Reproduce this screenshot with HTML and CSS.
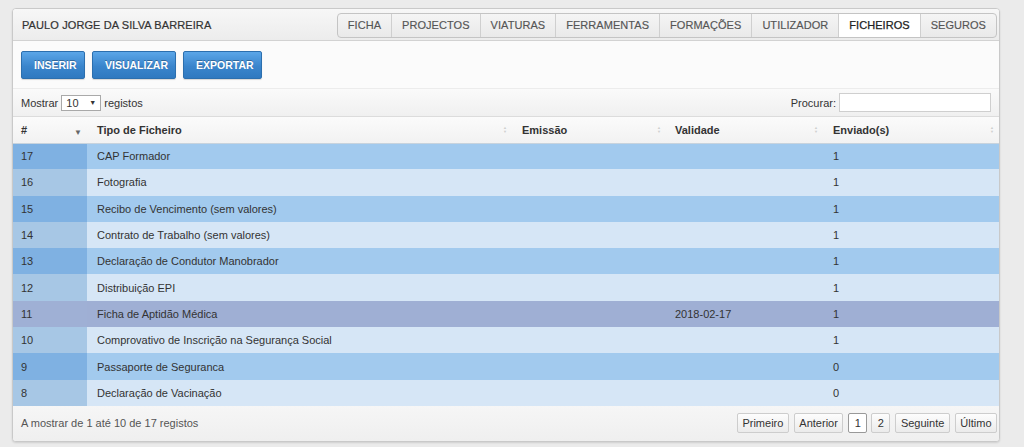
FILE: index.html
```html
<!DOCTYPE html>
<html lang="pt">
<head>
<meta charset="utf-8">
<title>Ficheiros</title>
<link rel="stylesheet" href="styles.css">
</head>
<body>
<div class="widget">
  <div class="widget-head">
    <div class="title">PAULO JORGE DA SILVA BARREIRA</div>
    <ul class="tabs">
      <li>FICHA</li>
      <li>PROJECTOS</li>
      <li>VIATURAS</li>
      <li>FERRAMENTAS</li>
      <li>FORMAÇÕES</li>
      <li>UTILIZADOR</li>
      <li class="active">FICHEIROS</li>
      <li>SEGUROS</li>
    </ul>
  </div>
  <div class="toolbar">
    <button class="btn">INSERIR</button>
    <button class="btn">VISUALIZAR</button>
    <button class="btn">EXPORTAR</button>
  </div>
  <div class="table-top">
    <div class="length">Mostrar <span class="select">10 <span class="caret">▼</span></span> registos</div>
    <div class="search">Procurar: <span class="input"></span></div>
  </div>
  <table class="grid">
    <colgroup>
      <col class="c1"><col class="c2"><col class="c3"><col class="c4"><col class="c5">
    </colgroup>
    <thead>
      <tr>
        <th><span>#</span><span class="sort desc">▼</span></th>
        <th><span>Tipo de Ficheiro</span><span class="sort both"><i>▲</i><i>▼</i></span></th>
        <th><span>Emissão</span><span class="sort both"><i>▲</i><i>▼</i></span></th>
        <th><span>Validade</span><span class="sort both"><i>▲</i><i>▼</i></span></th>
        <th><span>Enviado(s)</span><span class="sort both"><i>▲</i><i>▼</i></span></th>
      </tr>
    </thead>
    <tbody>
      <tr class="odd"><td>17</td><td>CAP Formador</td><td></td><td></td><td>1</td></tr>
      <tr class="even"><td>16</td><td>Fotografia</td><td></td><td></td><td>1</td></tr>
      <tr class="odd"><td>15</td><td>Recibo de Vencimento (sem valores)</td><td></td><td></td><td>1</td></tr>
      <tr class="even"><td>14</td><td>Contrato de Trabalho (sem valores)</td><td></td><td></td><td>1</td></tr>
      <tr class="odd"><td>13</td><td>Declaração de Condutor Manobrador</td><td></td><td></td><td>1</td></tr>
      <tr class="even"><td>12</td><td>Distribuição EPI</td><td></td><td></td><td>1</td></tr>
      <tr class="hover"><td>11</td><td>Ficha de Aptidão Médica</td><td></td><td>2018-02-17</td><td>1</td></tr>
      <tr class="even"><td>10</td><td>Comprovativo de Inscrição na Segurança Social</td><td></td><td></td><td>1</td></tr>
      <tr class="odd"><td>9</td><td>Passaporte de Seguranca</td><td></td><td></td><td>0</td></tr>
      <tr class="even"><td>8</td><td>Declaração de Vacinação</td><td></td><td></td><td>0</td></tr>
    </tbody>
  </table>
  <div class="table-foot">
    <div class="info">A mostrar de 1 até 10 de 17 registos</div>
    <div class="pager">
      <span class="pg">Primeiro</span>
      <span class="pg">Anterior</span>
      <span class="pg num current">1</span>
      <span class="pg num">2</span>
      <span class="pg">Seguinte</span>
      <span class="pg">Último</span>
    </div>
  </div>
</div>
</body>
</html>
```

FILE: styles.css
```css
* { box-sizing: border-box; }
html, body { margin: 0; padding: 0; }
body {
  background: #ebebeb;
  font-family: "Liberation Sans", Arial, sans-serif;
  font-size: 11px;
  color: #333;
  padding: 8px 24px 6px 12px;
}
.widget {
  border: 1px solid #c9c9c9;
  border-radius: 4px;
  background: #fff;
  box-shadow: 0 1px 2px rgba(0,0,0,0.12);
  overflow: hidden;
}
.widget-head {
  height: 32px;
  display: flex;
  align-items: center;
  justify-content: space-between;
  padding: 0 2px 0 9px;
  background: linear-gradient(#f7f7f7, #ececec);
  border-bottom: 1px solid #d2d2d2;
}
.title {
  font-size: 11px;
  color: #333;
  letter-spacing: 0.1px;
  -webkit-text-stroke: 0.2px #333;
}
.tabs {
  list-style: none;
  margin: 0;
  padding: 0;
  display: flex;
  height: 25px;
  border: 1px solid #c4c4c4;
  border-radius: 4px;
  background: linear-gradient(#f5f5f5, #e9e9e9);
  overflow: hidden;
  margin-top: 1px;
}
.tabs li {
  height: 100%;
  display: flex;
  align-items: center;
  padding: 0 10px;
  font-size: 11px;
  color: #555;
  letter-spacing: 0.05px;
  border-left: 1px solid #cfcfcf;
  -webkit-text-stroke: 0.15px #555;
}
.tabs li:first-child { border-left: 0; }
.tabs li.active {
  background: #fff;
  color: #222;
  -webkit-text-stroke: 0.25px #222;
}
.toolbar {
  height: 47px;
  display: flex;
  align-items: center;
  gap: 7px;
  padding: 1px 8px 0;
  background: #fbfbfb;
}
.btn {
  height: 28px;
  padding: 0 12px;
  border: 1px solid #2c6fae;
  border-radius: 2px;
  background: linear-gradient(#5ba6e8, #3a85cc 55%, #2f79c0);
  color: #fff;
  font-family: "Liberation Sans", Arial, sans-serif;
  font-size: 10.5px;
  font-weight: bold;
  text-shadow: 0 -1px 0 rgba(0,0,0,0.3);
  box-shadow: 0 1px 1px rgba(0,0,0,0.15);
}
.btn:nth-child(1) { width: 64px; }
.btn:nth-child(2) { width: 84px; }
.btn:nth-child(3) { width: 79px; }
.table-top {
  height: 29px;
  display: flex;
  align-items: center;
  justify-content: space-between;
  padding: 0 8px 0 8px;
  background: linear-gradient(#fafafa, #f0f0f0);
  border-top: 1px solid #ececec;
  border-bottom: 1px solid #dcdcdc;
  color: #333;
}
.length { display: flex; align-items: center; gap: 3px; }
.select {
  display: inline-flex;
  align-items: center;
  justify-content: space-between;
  width: 40px;
  height: 16px;
  padding: 0 4px;
  border: 1px solid #a9a9a9;
  background: #fff;
  font-size: 11px;
}
.caret { font-size: 7px; color: #333; }
.search { display: flex; align-items: center; gap: 3px; }
.input {
  display: inline-block;
  width: 152px;
  height: 19px;
  border: 1px solid #cfcfcf;
  background: #fff;
}
.grid {
  width: 100%;
  border-collapse: collapse;
  table-layout: fixed;
}
.c1 { width: 74px; }
.c2 { width: 425px; }
.c3 { width: 154px; }
.c4 { width: 157px; }
.c5 { width: auto; }
.grid th {
  height: 26px;
  text-align: left;
  font-weight: bold;
  padding: 0 8px 0 8px;
  background: linear-gradient(#fbfbfb, #f2f2f2);
  border-bottom: 1px solid #c8d3dd;
  position: relative;
  color: #333;
}
.grid th .sort {
  position: absolute;
  right: 5px;
  top: 50%;
  transform: translateY(-50%);
}
.sort.desc {
  font-size: 8px;
  color: #666;
  margin-top: 2px;
  right: 6px;
}
.sort.both {
  display: flex;
  flex-direction: column;
  font-size: 4px;
  line-height: 4px;
  color: #cfcfcf;
}
.sort.both i { font-style: normal; }
.grid td {
  height: 26.3px;
  padding: 0 8px;
  color: #333;
  white-space: nowrap;
}
.grid tr.odd td { background: #a2caee; }
.grid tr.odd td:first-child { background: #7fb1e2; }
.grid tr.even td { background: #d6e6f6; }
.grid tr.even td:first-child { background: #a7c7e5; }
.grid tr.hover td { background: #9fafd4; }
.grid tr.hover td:first-child { background: #9fb0d5; }
.grid td:nth-child(2) { padding-left: 10px; }
.grid td:nth-child(4) { padding-left: 9px; }
.grid td:nth-child(5) { padding-left: 10px; }
.grid th:nth-child(2) { padding-left: 10px; }
.grid th:nth-child(3) { padding-left: 10px; }
.grid th:nth-child(4) { padding-left: 9px; }
.grid th:nth-child(5) { padding-left: 10px; }
.table-foot {
  height: 35px;
  display: flex;
  align-items: center;
  justify-content: space-between;
  padding: 0 2px 0 8px;
  background: linear-gradient(#f6f6f6, #efefef);
  color: #555;
}
.pager { display: flex; gap: 5px; align-items: center; }
.pg {
  display: inline-flex;
  align-items: center;
  justify-content: center;
  height: 20px;
  padding: 0 4.5px;
  border: 1px solid #cdcdcd;
  border-radius: 2px;
  background: linear-gradient(#fdfdfd, #ebebeb);
  color: #333;
  font-size: 11px;
}
.pg.num { width: 19px; padding: 0; }
.pg.current {
  background: #fff;
  border-color: #999;
}
.pager .pg:nth-child(4) { margin-left: -1px; }
```
